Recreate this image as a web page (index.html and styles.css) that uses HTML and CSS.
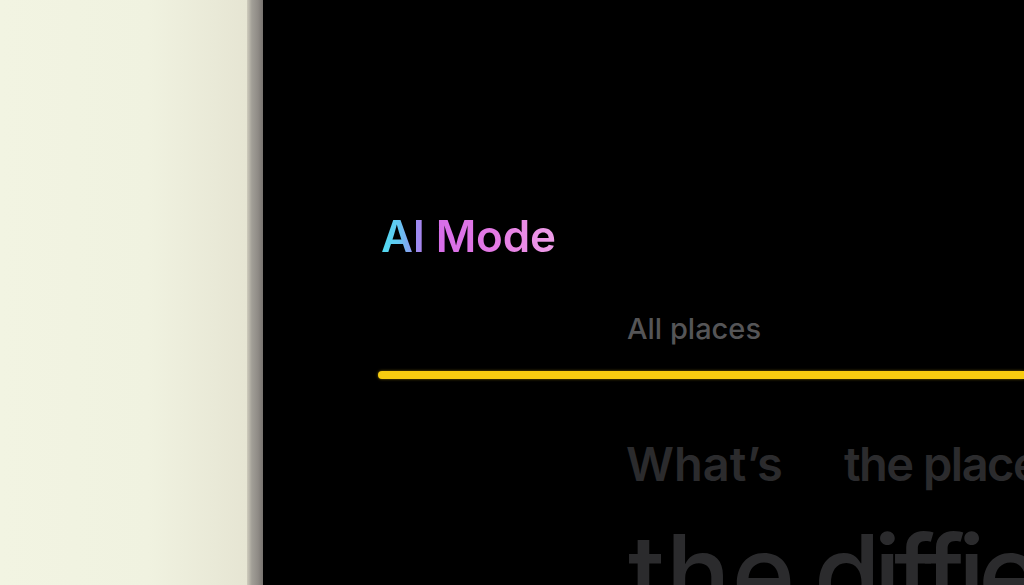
FILE: index.html
```html
<!DOCTYPE html>
<html>
<head>
<meta charset="utf-8">
<link rel="stylesheet" href="styles.css">
</head>
<body>
<div class="scene">
  <div class="wall"></div>
  <div class="bezel"></div>
  <main class="screen">
    <h1 class="brand">AI Mode</h1>
    <div class="tabs">
      <span class="tab">All places</span>
    </div>
    <div class="indicator"></div>
    <div class="query">
      <p class="line1"><span>What’s</span><span class="gap">the places</span></p>
      <p class="line2"><span class="w1">the</span> <span class="w2">diffie</span></p>
    </div>
  </main>
</div>
</body>
</html>
```

FILE: styles.css
```css
html, body {
  margin: 0;
  padding: 0;
  width: 1024px;
  height: 585px;
  overflow: hidden;
  background: #000;
}
.scene {
  display: flex;
  width: 1024px;
  height: 585px;
  font-family: Inter, "Noto Sans", sans-serif;
}
.wall {
  width: 247px;
  flex: none;
  background: linear-gradient(90deg, #f2f4e2 0%, #f0f2e0 60%, #e6e5d3 100%);
}
.bezel {
  width: 16px;
  flex: none;
  background: linear-gradient(90deg, #cfccbd 0%, #a29f97 30%, #8e8a85 70%, #77736f 100%);
}
.screen {
  flex: 1;
  min-width: 0;
  background: #000;
  display: flex;
  flex-direction: column;
  overflow: hidden;
  padding-top: 206px;
}
.screen > * {
  flex: none;
}
.brand {
  margin: 0 0 0 118px;
  font-size: 44px;
  font-weight: 600;
  line-height: 60px;
  letter-spacing: -0.2px;
  background: linear-gradient(90deg, #4fdcf0 0%, #62c8f2 10%, #9a8cf0 20%, #d86ee8 34%, #e47ae4 65%, #ef9ee8 100%);
  -webkit-background-clip: text;
  background-clip: text;
  color: transparent;
  align-self: flex-start;
}
.tabs {
  margin: 46px 0 0 364px;
  display: flex;
}
.tab {
  font-size: 29px;
  font-weight: 500;
  line-height: 34px;
  color: #555557;
  letter-spacing: 0;
}
.indicator {
  margin: 25px 0 0 115px;
  height: 8px;
  background: #f7cc10;
  border-radius: 4px 0 0 4px;
  box-shadow: 0 0 3px rgba(247, 204, 16, 0.5);
}
.query {
  margin: 60px 0 0 363px;
  color: #2b2b2d;
  white-space: nowrap;
}
.line1 {
  margin: 0;
  font-size: 47px;
  font-weight: 600;
  line-height: 50px;
  letter-spacing: 0;
}
.gap {
  margin-left: 61px;
  letter-spacing: -1.5px;
}
.line2 {
  margin: 31px 0 0 2px;
  font-size: 108px;
  font-weight: 500;
  line-height: 108px;
  letter-spacing: 1px;
  font-variant-ligatures: none;
}
.w2 {
  margin-left: -12px;
  letter-spacing: -7px;
}
```
